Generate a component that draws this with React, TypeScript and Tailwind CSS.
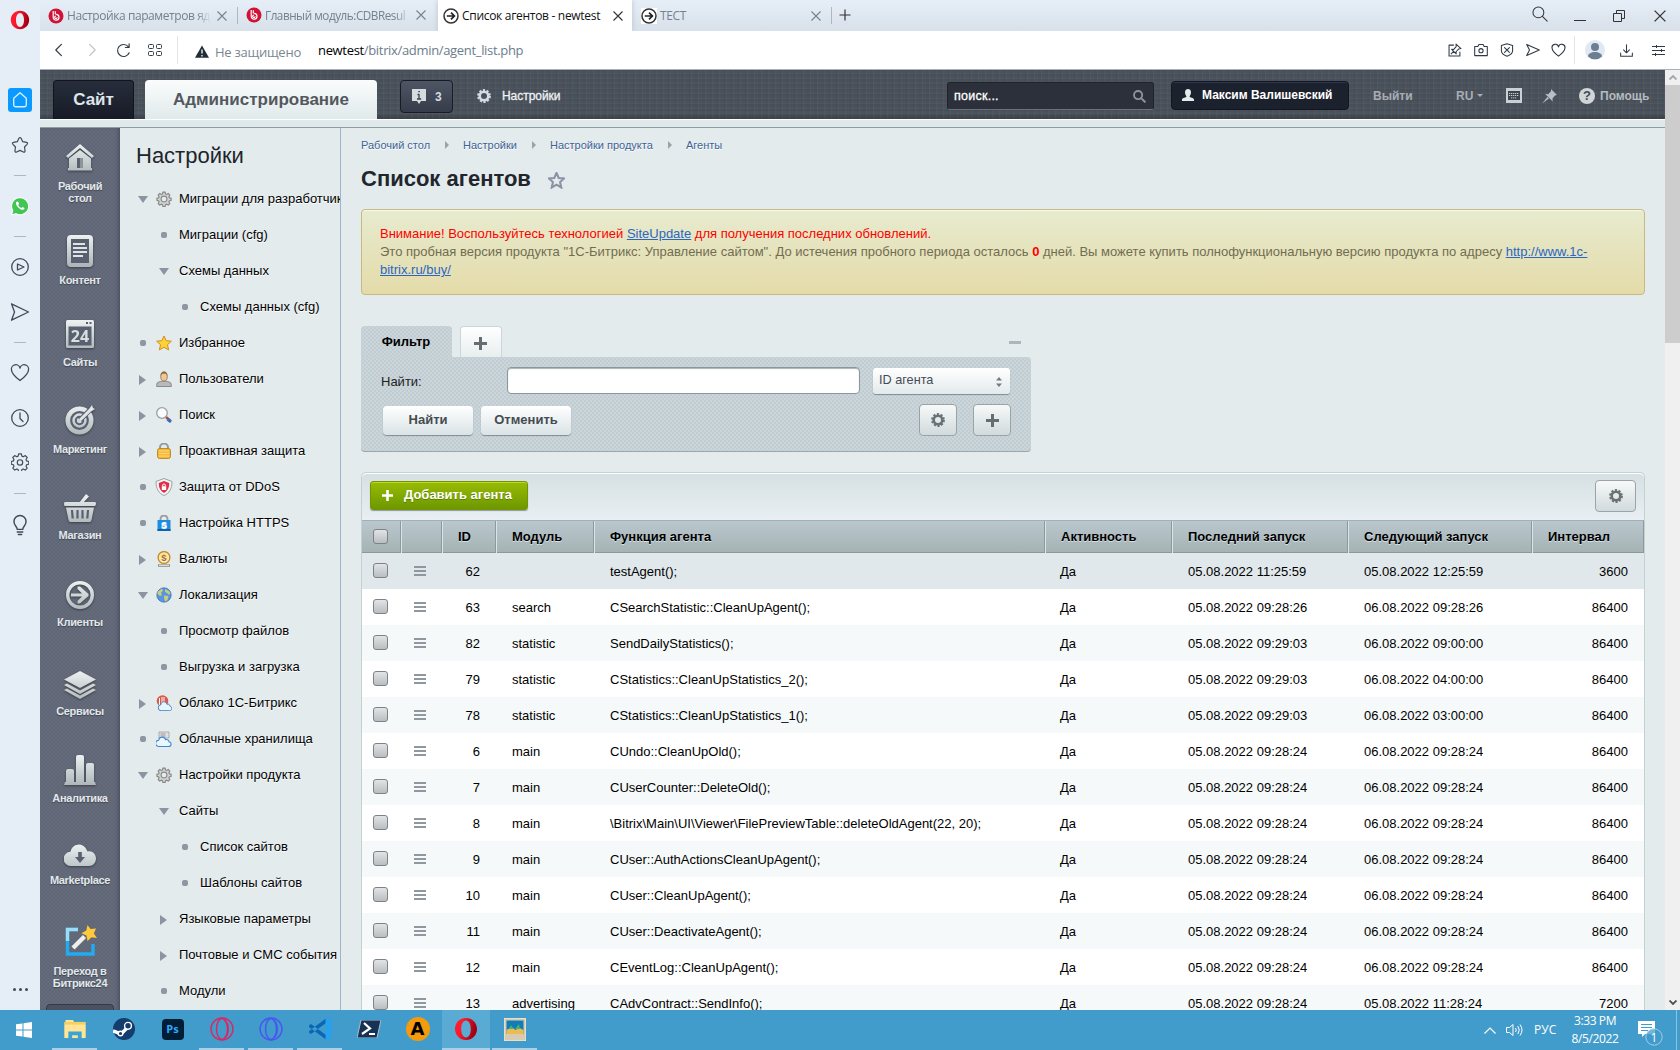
import React from "react";

type P = { className?: string };

/* ---------- browser side bar icons ---------- */

const OperaO = ({ className = "", a = "#ff1b2d", b = "#a70014" }: P & { a?: string; b?: string }) => (
  <svg viewBox="0 0 24 24" className={className}>
    <defs>
      <linearGradient id={"op" + a.slice(1)} x1="0" y1="0" x2="1" y2="0.3">
        <stop offset="0.35" stopColor={a} />
        <stop offset="1" stopColor={b} />
      </linearGradient>
    </defs>
    <path fillRule="evenodd" fill={`url(#op${a.slice(1)})`} d="M12 1C5.8 1 1 5.9 1 12s4.8 11 11 11 11-4.900 11-11S18.200 1 12 1Zm0 2.600c3 0 4.800 3.700 4.800 8.400s-1.800 8.400-4.800 8.400S7.200 16.700 7.200 12 9 3.600 12 3.600Z" />
  </svg>
);

const Line = ({ className = "", children, w = 1.3 }: P & { children: React.ReactNode; w?: number }) => (
  <svg viewBox="0 0 20 20" className={className} fill="none" stroke="currentColor" strokeWidth={w} strokeLinecap="round" strokeLinejoin="round">
    {children}
  </svg>
);

const roundStar = "M8.800 2.600Q10 .8 11.200 2.600L13 6.300 17.200 7Q19.300 7.500 17.800 9.200L15 12.200 15.600 16.300Q15.700 18.500 13.700 17.700L10 16 6.300 17.700Q4.300 18.500 4.400 16.300L5 12.200 2.200 9.200Q.7 7.500 2.800 7L7 6.300Z";
const sharpStar = "M10 1 12.600 7 19 7.600 14.200 11.800 15.600 18.200 10 14.800 4.400 18.200 5.800 11.800 1 7.600 7.400 7Z";
const heartPath = "M10 17.500C6 14.500 1.500 11 1.500 7A4.300 4.300 0 0 1 10 5.200 4.300 4.300 0 0 1 18.500 7C18.500 11 14 14.500 10 17.500Z";
const cogPath =
  "M8.500 1h3l.6 2.500 1.500.7 2.300-1.300 2.100 2.100-1.300 2.300.6 1.500 2.500.7v2.900l-2.500.7-.6 1.500 1.300 2.300-2.100 2.100-2.300-1.300-1.500.7-.6 2.400h-3l-.6-2.400-1.500-.7-2.300 1.300L2 16.900l1.300-2.300-.6-1.500-2.400-.7V9.500l2.400-.7.6-1.500L2 5l2.100-2.100 2.300 1.300 1.500-.7Z";

const SidebarRule = ({ className = "" }: P) => <div className={`h-px w-3 shrink-0 bg-[#a9b7c6] ${className}`} />;

function OperaSidebar() {
  return (
    <aside className="flex h-[1010px] w-10 shrink-0 flex-col items-center bg-[#e5edf6] text-[#3f4a59]">
      <OperaO className="mt-[10px] h-5 w-5 shrink-0" />
      <div className="mt-[58px] flex h-6 w-6 shrink-0 items-center justify-center rounded-[3px] bg-[#0a9aff] text-[#d9f0ff]">
        <Line className="h-[18px] w-[18px]" w={1.500}><path d="M3 8 10 2l7 6v7.500a2 2 0 0 1-2 2H5a2 2 0 0 1-2-2Z" /></Line>
      </div>
      <Line className="mt-[24px] mb-px h-[18px] w-[18px] shrink-0"><path d={roundStar} /></Line>
      <SidebarRule className="mt-5" />
      <svg viewBox="0 0 20 20" className="mt-5 h-5 w-5 shrink-0">
        <path d="M1.500 19 2.700 14.500A8.600 8.600 0 1 1 6 17.700Z" fill="#43c553" stroke="#f7fbf8" strokeWidth="1.200" />
        <path d="M7 5.500c-1.600.8-1.400 3.300 1.300 6s5.300 3 6.200 1.300l-.1-.9-2-1-1.200 1.100c-1.300-.5-2.400-1.700-3-2.900l.9-1.200-.9-2.200Z" fill="#fff" />
      </svg>
      <SidebarRule className="mt-5" />
      <Line className="mt-5 h-5 w-5 shrink-0"><circle cx="10" cy="10" r="8.300" /><path d="M7.500 7v6l6.500-3Z" /></Line>
      <Line className="mt-[25px] h-5 w-5 shrink-0"><path d="M1.500 1.800 18.500 10 1.500 18.200 4.500 10Z" /></Line>
      <SidebarRule className="mt-5" />
      <Line className="mt-5 h-5 w-5 shrink-0"><path d={heartPath} /></Line>
      <Line className="mt-[25px] h-5 w-5 shrink-0"><circle cx="10" cy="10" r="8.300" /><path d="M10 5v5.500l3 3" /></Line>
      <Line className="mt-[25px] h-[18px] w-[18px] shrink-0"><path d={cogPath} /><circle cx="10" cy="10.500" r="3" /></Line>
      <SidebarRule className="mt-[22px]" />
      <Line className="mt-5 h-[22px] w-[22px] shrink-0"><path d="M7.500 14C7.500 11.500 4.500 10.500 4.500 6.800a5.500 5.500 0 0 1 11 0c0 3.700-3 4.700-3 7.200ZM7.500 16.300h5M8.500 18.700h3" /></Line>
      <div className="mt-auto mb-[19px] flex shrink-0 gap-[3px]">
        <i className="h-[3px] w-[3px] rounded-full bg-[#3f4a59]" />
        <i className="h-[3px] w-[3px] rounded-full bg-[#3f4a59]" />
        <i className="h-[3px] w-[3px] rounded-full bg-[#3f4a59]" />
      </div>
    </aside>
  );
}

/* ---------- tab strip and address bar ---------- */

const BitrixDot = () => (
  <svg viewBox="0 0 16 16" className="h-4 w-4 shrink-0">
    <circle cx="8" cy="8" r="7.500" fill="#cf1235" />
    <path d="M5.200 3v6.300A2.900 2.900 0 1 0 8.100 6.400M7.300 3.300v3.300M8 8.100a1.200 1.200 0 1 0 1.100 1.200" stroke="#fff" strokeWidth="1.200" fill="none" />
  </svg>
);
const ArrowDot = () => (
  <svg viewBox="0 0 16 16" className="h-4 w-4 shrink-0 bg-white">
    <circle cx="8" cy="8" r="7" fill="#fff" stroke="#333" strokeWidth="1.500" />
    <path d="M3.800 8h7M8 4.600 11.400 8 8 11.400" stroke="#222" strokeWidth="1.700" fill="none" />
  </svg>
);
const Cross = ({ className = "h-[10px] w-[10px]" }: P) => (
  <svg viewBox="0 0 10 10" className={`shrink-0 ${className}`} stroke="currentColor" strokeWidth="1.100"><path d="m.5.5 9 9m0-9-9 9" /></svg>
);

function TabStrip() {
  return (
    <div className="flex h-[31px] items-center bg-gradient-to-b from-[#e6eef7] to-[#d8e0e9] font-['Open_Sans','Noto_Sans',sans-serif] text-[12px] tracking-[-0.36px] text-[#74828f]">
      <div className="flex w-[198px] items-center pl-2">
        <BitrixDot />
        <span className="ml-[3px] w-[144px] overflow-hidden tracking-[-0.42px] whitespace-nowrap [mask-image:linear-gradient(90deg,#000_90%,transparent)]">Настройка параметров яд</span>
        <Cross className="ml-[6px] h-[10px] w-[10px]" />
        <i className="ml-[10px] h-[17px] w-px bg-[#a9b9c9]" />
      </div>
      <div className="flex w-[200px] items-center pl-2">
        <BitrixDot />
        <span className="ml-[3px] w-[145px] overflow-hidden text-[11.700px] tracking-[-0.45px] whitespace-nowrap [mask-image:linear-gradient(90deg,#000_90%,transparent)]">Главный модуль:CDBResul</span>
        <Cross className="ml-[6px] h-[10px] w-[10px]" />
      </div>
      <div className="flex h-full w-[194px] items-center bg-white pl-[5px] text-[#111] shadow-[0_0_5px_#b9c4cf] [clip-path:inset(0_-5px_0_-5px)]">
        <ArrowDot />
        <span className="ml-[3px] w-[146px] tracking-[-0.3px] whitespace-nowrap">Список агентов - newtest</span>
        <Cross className="ml-[5px] h-[10px] w-[10px] text-[#333]" />
      </div>
      <div className="flex w-[200px] items-center pl-[9px]">
        <ArrowDot />
        <span className="ml-[3px] w-[142px]">ТЕСТ</span>
        <Cross className="ml-[9px] h-[10px] w-[10px]" />
        <i className="ml-[10px] h-[17px] w-px bg-[#a9b9c9]" />
      </div>
      <svg viewBox="0 0 12 12" className="mb-px ml-[7px] h-3 w-3 text-[#333]" stroke="currentColor" strokeWidth="1.200"><path d="M6 .5v11M.5 6h11" /></svg>
      <div className="ml-auto flex items-center text-[#333]">
        <Line className="mb-1 h-[16px] w-[16px]"><circle cx="8" cy="8" r="6.800" /><path d="m13 13 6 6" /></Line>
        <i className="mt-[10px] ml-[26px] h-px w-3 bg-[#333]" />
        <svg viewBox="0 0 12 12" className="mr-[29px] ml-[27px] h-3 w-3" fill="none" stroke="currentColor"><path d="M.5 3.500h8v8h-8ZM3.500 3V.5h8v8H9" /></svg>
        <Cross className="mr-[14px] h-3 w-3" />
      </div>
    </div>
  );
}

function AddressBar() {
  return (
    <div className="flex h-[39px] items-center border-b border-[#a5b1bc] bg-white font-['Open_Sans','Noto_Sans',sans-serif] text-[#333d48]">
      <Line className="ml-[11px] h-4 w-4" w={1.500}><path d="M13 3 6 10l7 7" /></Line>
      <Line className="ml-[17px] h-4 w-4 text-[#c1c5c9]" w={1.500}><path d="m7 3 7 7-7 7" /></Line>
      <Line className="ml-4 h-[15px] w-[15px]" w={1.600}><path d="M17.500 13A8 8 0 1 1 16.500 5.200M17.500 1v5h-5" /></Line>
      <svg viewBox="0 0 14 12" className="ml-[17px] h-3 w-[14px]" fill="none" stroke="currentColor"><rect x=".5" y=".5" width="5" height="4" rx="1" /><rect x="8.500" y=".5" width="5" height="4" rx="1" /><rect x=".5" y="7.500" width="5" height="4" rx="1" /><rect x="8.500" y="7.500" width="5" height="4" rx="1" /></svg>
      <i className="ml-[15px] h-7 w-px bg-[#e1e5e9]" />
      <svg viewBox="0 0 14 13" className="mt-[2px] ml-[17px] h-[13px] w-[14px]"><path d="M7 .5 14 12.800H0Z" fill="#222d38" /><path d="M7 4.500v4M7 10v1.500" stroke="#fff" strokeWidth="1.300" /></svg>
      <span className="mt-[5px] ml-[6px] w-[103px] text-[13px] tracking-[-0.25px] whitespace-nowrap text-[#7b868f]">Не защищено</span>
      <span className="mt-px text-[13px] tracking-[-0.33px] whitespace-nowrap text-[#6b7c8b]"><b className="font-normal text-black">newtest</b>/bitrix/admin/agent_list.php</span>
      <div className="ml-auto flex items-center text-[#2f3a46]">
        <Line className="mr-3 h-[14px] w-[14px]" w={1.500}><path d="M8 3H1.500v15.500H17V13M11.500 1.500l7 6.500-3 .5-4 4 .2 3-6.500-6.500 3 .2 3.500-4ZM8 12l-3.500 3.500" /></Line>
        <Line className="mr-3 h-[14px] w-[14px]" w={1.500}><path d="M1 5h4.500l1.500-3h6l1.500 3H19v13H1Z" /><circle cx="10" cy="11" r="3" /></Line>
        <Line className="mr-3 h-[14px] w-[14px]" w={1.500}><path d="M10 1 18 3.500V11c0 4.500-4 6.500-8 8-4-1.500-8-3.500-8-8V3.500ZM6.500 6.500l7 7m0-7-7 7" /></Line>
        <Line className="mr-[11px] h-[14px] w-[14px]" w={1.500}><path d="M1 2l18 8L1 18l4-8Z" /></Line>
        <Line className="mr-2 h-[15px] w-[15px]" w={1.500}><path d={heartPath} /></Line>
        <i className="mr-[10px] h-7 w-px bg-[#e1e5e9]" />
        <svg viewBox="0 0 20 20" className="mr-[15px] h-5 w-5"><circle cx="10" cy="10" r="10" fill="#e0e8f1" /><circle cx="10" cy="7" r="4" fill="#6b7e92" /><path d="M3 16.500c0-6 14-6 14 0A10 10 0 0 1 3 16.500Z" fill="#6b7e92" /></svg>
        <Line className="mr-[19px] h-[13px] w-[13px]" w={1.600}><path d="M10 1v12M5.500 9l4.500 4.500L14.500 9M1 14v5h18v-5" /></Line>
        <svg viewBox="0 0 13 11" className="mr-[15px] h-[11px] w-[13px]" stroke="currentColor"><path d="M0 1.500h13M0 5.500h13M0 9.500h13M4.500 0v3M9.500 4v3M3.500 8v3" /></svg>
      </div>
    </div>
  );
}

/* ---------- admin header ---------- */

const SmallCog = ({ className = "" }: P) => (
  <svg viewBox="0 0 14 14" className={className}>
    <circle cx="7" cy="7" r="4.300" fill="none" stroke="currentColor" strokeWidth="2.600" />
    <circle cx="7" cy="7" r="6" fill="none" stroke="currentColor" strokeWidth="1.800" strokeDasharray="2.200 1.570" />
  </svg>
);

function AdminHeader() {
  return (
    <header className="flex h-[49px] items-start bg-[#4a525c] bg-[repeating-linear-gradient(0deg,rgba(255,255,255,0.025)_0_1px,transparent_1px_3px,rgba(0,0,0,0.03)_3px_5px),repeating-linear-gradient(90deg,rgba(255,255,255,0.03)_0_1px,transparent_1px_4px,rgba(0,0,0,0.02)_4px_7px),linear-gradient(180deg,rgba(0,0,0,0)_90%,rgba(0,0,0,0.25)_100%)] text-[13px] font-bold text-[#d5dde2]">
      <div className="mt-[10px] ml-[13px] h-[39px] w-[81px] rounded-t-[4px] border border-b-0 border-[#11141c] bg-gradient-to-b from-[#272d3b] to-[#171b27] text-center text-[17px] leading-[37px] text-[#dfe5e9]">Сайт</div>
      <div className="mt-[10px] ml-[11px] h-[39px] w-[232px] rounded-t-[4px] bg-gradient-to-b from-[#fbfcfc] to-[#e0eaeb] text-center text-[17px] leading-[39px] text-[#53585e]">Администрирование</div>
      <div className="mt-[10px] ml-[23px] flex h-[33px] w-[53px] items-center rounded-[4px] border border-[#181b22] bg-gradient-to-b from-[#4e5665] to-[#363c49] pl-[11px] text-[12px]">
        <svg viewBox="0 0 14 15" className="h-[15px] w-[14px]"><path d="M0 0h14v12H9l-2 3-2-3H0Z" fill="#d5dddf" /><path d="M7 5v5M5.500 5.500H7M5 10h4.200M6.300 2.700h1.600" stroke="#3c4350" strokeWidth="1.300" /></svg>
        <span className="ml-[9px]">3</span>
      </div>
      <SmallCog className="mt-[19px] ml-[24px] h-[14px] w-[14px]" />
      <span className="mt-[17px] ml-[11px] w-[59px] text-[12px] leading-[18px] font-medium tracking-[-0.05px] text-[#eef2f4] [-webkit-text-stroke:0.3px_#eef2f4]">Настройки</span>
      <div className="mt-3 ml-auto flex h-[28px] w-[207px] items-center rounded-[3px] border border-[#20232a] border-b-[#6b707a] bg-[#2c303b] px-[6px] text-[12.500px] font-normal text-white">
        <span className="tracking-[0.25px] [-webkit-text-stroke:0.3px_#fff]">поиск...</span>
        <svg viewBox="0 0 14 14" className="mr-px ml-auto h-[13px] w-[13px]" fill="none" stroke="#8e949c"><circle cx="5.500" cy="5.500" r="4.400" strokeWidth="2" /><path d="m9 9 4.300 4.300" strokeWidth="2.200" /></svg>
      </div>
      <div className="mt-[11px] ml-[17px] flex h-[29px] w-[178px] items-center rounded-[4px] border border-[#12151d] bg-[#1c212e] pb-[2px] pl-[10px] text-[12px] whitespace-nowrap text-white shadow-[inset_0_1px_0_#2c3855]">
        <svg viewBox="0 0 12 12" className="mr-[8px] h-3 w-3 shrink-0"><path d="M6 0c2 0 3 1.400 3 3.300S8 7 7.500 7.400c0 1 4.500 1.200 4.500 3.100V12H0v-1.500c0-1.900 4.500-2.100 4.500-3.100C4 7 3 5.200 3 3.300S4 0 6 0Z" fill="#e5eaec" /></svg>
        Максим Валишевский
      </div>
      <span className="mt-[17px] ml-6 w-[83px] text-[12px] leading-[18px] text-[#a8adb4]">Выйти</span>
      <span className="mt-[17px] w-[50px] text-[12px] leading-[18px] text-[#a8adb4]">RU<i className="mb-[3px] ml-1 inline-block border-x-[3px] border-t-[3px] border-x-transparent border-t-[#a8adb4]" /></span>
      <svg viewBox="0 0 16 15" className="mt-[18px] h-[15px] w-4"><path d="M0 0h16v15H0Z" fill="#c9d1d5" /><path d="M2 3h12v9H2Z" fill="#3f454f" /><path d="M3 5.500h10M3 7.500h10M5 9.900h6" stroke="#c7ccd0" strokeDasharray="1.300 .7" /></svg>
      <svg viewBox="0 0 15 15" className="mt-[19px] ml-[20px] h-[15px] w-[15px]"><path d="m9 0 6 6-2 .5-2.500 3 .2 3-7.500-7.500 3 .2 2.800-3ZM5.500 8 0 14.500 7 9.500Z" fill="#b9bec3" /></svg>
      <div className="mt-[18px] ml-[22px] flex h-4 w-4 items-center justify-center rounded-full bg-[#d0d5d8] text-[13px] text-[#434955]">?</div>
      <span className="mt-[17px] mr-[15px] ml-[5px] w-[50px] text-[12px] leading-[18px] text-[#b5babf]">Помощь</span>
    </header>
  );
}

/* ---------- main icon menu ---------- */

const Metal = ({ className = "", box, children }: P & { box: string; children: React.ReactNode }) => (
  <svg viewBox={box} className={`shrink-0 drop-shadow-[0_1px_1px_rgba(0,0,0,0.4)] ${className}`}>
    <defs>
      <linearGradient id="metal" gradientUnits="userSpaceOnUse" x1="0" y1="0" x2="0" y2="30"><stop offset="0" stopColor="#edf1f1" /><stop offset="1" stopColor="#afb7ba" /></linearGradient>
    </defs>
    {children}
  </svg>
);
const m = "url(#metal)";
const dark = "#596070";

const menu: { label: string[]; gap: string; labelGap: string; icon: React.ReactNode }[] = [
  {
    label: ["Рабочий", "стол"], gap: "mt-4", labelGap: "mt-[9px]",
    icon: <Metal box="0 0 28 27" className="h-[27px] w-7"><path d="M14 0 28 12l-2 2L14 4 2 14l-2-2ZM3 14.500 14 6l11 8.500V24h1v2.500H2V24h1Z" fill={m} /><path d="M11 14h6v10h-6Z" fill={dark} /><path d="M14 14h3v10h-3Z" fill="#8c949c" /></Metal>,
  },
  {
    label: ["Контент"], gap: "mt-[31px]", labelGap: "mt-[7px]",
    icon: <Metal box="0 0 26 32" className="h-8 w-[26px]"><rect width="26" height="32" rx="4" fill={m} /><rect x="4" y="4" width="18" height="24" fill={dark} /><path d="M6 9h12M6 13h14M6 17h14M6 21h10" stroke="#dfe4e5" strokeWidth="1.800" /></Metal>,
  },
  {
    label: ["Сайты"], gap: "mt-[34px]", labelGap: "mt-2",
    icon: <Metal box="0 0 28 28" className="h-7 w-7"><rect width="28" height="28" rx="1.500" fill={m} /><rect x="2.500" y="6.500" width="23" height="19" fill={dark} /><path d="M20 3h2M23.500 3h2" stroke={dark} strokeWidth="2" /><text x="14" y="22" textAnchor="middle" fontSize="16" fontWeight="700" fontFamily="Open Sans" fill="#d9dede">24</text></Metal>,
  },
  {
    label: ["Маркетинг"], gap: "mt-[37px]", labelGap: "mt-2",
    icon: <Metal box="0 0 30 30" className="h-[30px] w-[30px]"><circle cx="14.500" cy="15.500" r="14" fill={m} /><circle cx="14.500" cy="15.500" r="8.300" fill="none" stroke={dark} strokeWidth="2.200" /><circle cx="14.500" cy="15.500" r="3.700" fill="none" stroke={dark} strokeWidth="2" /><path d="m15 15 13-13" stroke={dark} strokeWidth="5" /><path d="M14 14 24 4l3-4 1 3 2 1-4 2.500-10.500 10Z" fill="#e1e5e6" /></Metal>,
  },
  {
    label: ["Магазин"], gap: "mt-[39px]", labelGap: "mt-[7px]",
    icon: <Metal box="0 0 32 28" className="h-7 w-8"><path d="m22 0 3 2.500L19 9h-4ZM1 8h30q1 0 1 1.500T31 12H1q-1 0-1-2T1 8ZM2 13.500h28L27.500 26q-.5 2-2 2h-19q-1.500 0-2-2Z" fill={m} /><path d="m8 16 .7 8.500M13.500 16v8.500M18.500 16v8.500M24 16l-.7 8.500" stroke={dark} strokeWidth="2.200" /></Metal>,
  },
  {
    label: ["Клиенты"], gap: "mt-10", labelGap: "mt-[7px]",
    icon: <Metal box="0 0 28 28" className="h-7 w-7"><circle cx="14" cy="14" r="12.300" fill="none" stroke={m} strokeWidth="3.400" /><path d="M5 12.500h11l-4.500-4.500V5.500h2.500L22.500 13v2L14 22.500h-2.500V20l4.500-4.500H5Z" fill={m} /></Metal>,
  },
  {
    label: ["Сервисы"], gap: "mt-[43px]", labelGap: "mt-[6px]",
    icon: <Metal box="0 0 32 28" className="h-7 w-8"><path d="m16 0 16 8.500L16 17 0 8.500ZM0 14l3-1.500 13 7 13-7 3 1.500-16 9ZM0 19l3-1.500 13 7 13-7 3 1.500-16 9Z" fill={m} /></Metal>,
  },
  {
    label: ["Аналитика"], gap: "mt-[38px]", labelGap: "mt-[7px]",
    icon: <Metal box="0 0 32 30" className="h-[30px] w-8"><path d="M1 27h1V16q0-2 2-2h4q2 0 2 2v11h2V2q0-2 2-2h4q2 0 2 2v25h2V10q0-2 2-2h4q2 0 2 2v17h1l1 3H0Z" fill={m} /></Metal>,
  },
  {
    label: ["Marketplace"], gap: "mt-10", labelGap: "mt-2",
    icon: <Metal box="0 0 32 22" className="h-[22px] w-8"><path d="M7 22a7 7 0 0 1-.5-14.200C8-1 20-3 23.500 7.500 28 6 32 10 32 14.500c0 4-3 7.500-7 7.500Z" fill={m} /><path d="M14.200 8h3.600v5H21l-5 6-5-6h3.200Z" fill={dark} /></Metal>,
  },
  {
    label: ["Переход в", "Битрикс24"], gap: "mt-[39px]", labelGap: "mt-[9px]",
    icon: (
      <svg viewBox="0 0 32 31" className="ml-[2px] h-[31px] w-8 shrink-0">
        <path d="M13 4.500H2.500V29h25.500V19" fill="none" stroke="#22abf0" strokeWidth="3.400" />
        <path d="M13 4.500H2.500V16" fill="none" stroke="#9bdcf9" strokeWidth="3.400" />
        <path d="m8 23 11.500-11.500" stroke="#eceff0" strokeWidth="4.500" />
        <path d="m22.500 0 3 4 5.500-.5-2.200 5L32 13l-5.500-.8L22.500 16l-1-5.500-5-2.300 4.800-2.700Z" fill="#ffc93a" />
      </svg>
    ),
  },
];

function IconMenu() {
  return (
    <nav className="flex w-20 shrink-0 flex-col items-center overflow-hidden bg-[#666c7b] bg-[radial-gradient(#596070_0.5px,transparent_1px),radial-gradient(#596070_0.5px,transparent_1px)] bg-[length:4px_4px] bg-[position:0_0,2px_2px] text-[11px] leading-3 font-bold text-[#e3e8ea] shadow-[inset_-3px_0_4px_-2px_#444a58]">
      {menu.map((it) => (
        <div key={it.label[0]} className={`flex shrink-0 flex-col items-center ${it.gap}`}>
          {it.icon}
          <div className={`text-center tracking-[-0.32px] [text-shadow:0_1px_1px_#3f4553] ${it.labelGap}`}>
            {it.label.map((l) => <div key={l}>{l}</div>)}
          </div>
        </div>
      ))}
      <div className="mt-[15px] h-5 w-[68px] shrink-0 rounded-[4px] border border-[#343a47] bg-[#4b5161]" />
    </nav>
  );
}

/* ---------- settings tree ---------- */

const G = ({ children }: { children: React.ReactNode }) => <svg viewBox="0 0 16 16" className="h-4 w-4 shrink-0">{children}</svg>;
const gearIcon = <svg viewBox="-1 -.5 22 22" className="h-4 w-4 shrink-0"><path d={cogPath} fill="#d2d2d2" stroke="#858585" strokeWidth="1.500" /><circle cx="10" cy="10.600" r="4" fill="#e4ebec" stroke="#8b8b8b" strokeWidth="1.500" /></svg>;
const cloud = "M4 15.500a3 3 0 0 1-.3-6C4 6 9 5.500 10.200 9c2.500-.5 3.300 1 3.200 2 3.200.5 2.500 4.500-.4 4.500Z";
const icons: Record<string, React.ReactNode> = {
  gear: gearIcon,
  star: <G><path d="m8 1 2.200 4.700 5.100.5-3.800 3.500 1.100 5.200L8 12.300l-4.600 2.600 1.100-5.200L.7 6.200l5.100-.5Z" fill="#fcd337" stroke="#d28c1d" /></G>,
  user: <G><path d="M.7 15.500v-2C.7 10.500 5 10.800 6 10h4c1 .8 5.300.5 5.300 3.500v2Z" fill="#b9b9b9" stroke="#777" strokeWidth=".8" /><ellipse cx="8" cy="5.500" rx="3.300" ry="4.500" fill="#f0c698" stroke="#80603c" strokeWidth=".7" /><path d="M4.700 4.500C4.500-.8 11.500-.8 11.300 4.500L10 2.800H6.500Z" fill="#8b6a48" /></G>,
  search: <G><path d="m10 10 4.500 4" stroke="#b84a3a" strokeWidth="2.500" /><path d="m11.500 12 3.500 3" stroke="#4169b6" strokeWidth="3" /><circle cx="6" cy="6" r="5.300" fill="#f9fbfd" stroke="#9a9fa5" strokeWidth="1.300" /></G>,
  lock: <G><path d="M4 7V4.500a4 4 0 0 1 8 0V7" fill="none" stroke="#999" strokeWidth="2" /><rect x="1.500" y="5.500" width="13" height="10" rx="2" fill="#f6b733" stroke="#b87a17" strokeWidth=".8" /><path d="M3 8h10M3 10.500h10M3 13h10" stroke="#fadb83" strokeWidth="1" /></G>,
  ddos: <svg viewBox="0 0 18 18" className="-mr-px -ml-px h-[18px] w-[18px] shrink-0"><path d="m9 .5 8 3C17 11 14 15.500 9 17.500 4 15.500 1 11 1 3.500Z" fill="#f4f6f6" stroke="#999fa3" /><path d="m9 3 5.300 2C14.300 10 12.500 13 9 15 5.500 13 3.700 10 3.700 5Z" fill="#df3049" /><path d="M6.800 8.200h4.400v3.800H6.800Z" fill="#fff" /><path d="M7.700 8V6.700q1.300-1.700 2.600 0V8" fill="none" stroke="#fff" /></svg>,
  https: <G><path d="M4.500 6V4a3.500 3.500 0 0 1 7 0v2" fill="none" stroke="#9c9c9c" strokeWidth="1.900" /><path d="M1.500 5h13v11h-13Z" fill="#1c8de0" /><path d="M1.500 14h13v2h-13Z" fill="#0e63b0" /><text x="8" y="13" textAnchor="middle" fontSize="9" fontWeight="700" fontFamily="Liberation Sans" fill="#fff">S</text></G>,
  coin: <G><circle cx="8" cy="6.500" r="5.900" fill="#ffe6a4" stroke="#c58b2d" strokeWidth="1.300" /><path d="M2 14.500h12" stroke="#8e8e8e" strokeWidth="2.600" /><path d="M3 14.300h10" stroke="#eee" /><text x="8" y="10" textAnchor="middle" fontSize="9.500" fontWeight="700" fontFamily="Liberation Sans" fill="#a56b12">$</text></G>,
  globe: <G><circle cx="8" cy="8" r="7.200" fill="#5995df" stroke="#3b68a6" strokeWidth=".7" /><path d="M2 4.500 6 1.500l1 2L5 6l1 2-2 1-2.500-2ZM9 2l4 2 1.500 3-2 .5L11 6 9 5ZM8 8.500l4.500.5-1 4L9 14.500 8 11Z" fill="#c6cf80" /></G>,
  cloud1c: <G><circle cx="6.500" cy="6" r="5.800" fill="#d85a48" /><path d="M3.500 3v7M6 2v7M8 2v5" stroke="#fff" /><path d={cloud} transform="translate(1.500 .2) scale(.92 1)" fill="#e7f5fd" stroke="#3e83c8" /></G>,
  clouds: <G><path d="M3 1h10v6H3Z" fill="#e0e0e0" stroke="#939393" strokeWidth=".7" /><path d="M4.500 3h5M4.500 5h5" stroke="#999" /><path d={cloud} transform="translate(-1.200 -.8) scale(1.050)" fill="#eaf7ff" stroke="#3c88d4" /></G>,
};

type Mark = "d" | "r" | "b";
const tree: [number, Mark, string, string?][] = [
  [1, "d", "Миграции для разработчиков", "gear"],
  [2, "b", "Миграции (cfg)"],
  [2, "d", "Схемы данных"],
  [3, "b", "Схемы данных (cfg)"],
  [1, "b", "Избранное", "star"],
  [1, "r", "Пользователи", "user"],
  [1, "r", "Поиск", "search"],
  [1, "r", "Проактивная защита", "lock"],
  [1, "b", "Защита от DDoS", "ddos"],
  [1, "b", "Настройка HTTPS", "https"],
  [1, "r", "Валюты", "coin"],
  [1, "d", "Локализация", "globe"],
  [2, "b", "Просмотр файлов"],
  [2, "b", "Выгрузка и загрузка"],
  [1, "r", "Облако 1С-Битрикс", "cloud1c"],
  [1, "b", "Облачные хранилища", "clouds"],
  [1, "d", "Настройки продукта", "gear"],
  [2, "d", "Сайты"],
  [3, "b", "Список сайтов"],
  [3, "b", "Шаблоны сайтов"],
  [2, "r", "Языковые параметры"],
  [2, "r", "Почтовые и СМС события"],
  [2, "b", "Модули"],
];
const indent = ["", "pl-[17px]", "pl-[38px]", "pl-[59px]"];
const marks: Record<Mark, React.ReactNode> = {
  d: <i className="mt-px border-x-[5px] border-t-[7px] border-x-transparent border-t-[#8b95a2]" />,
  r: <i className="mt-px border-y-[5px] border-l-[7px] border-y-transparent border-l-[#8b95a2]" />,
  b: <i className="h-[6px] w-[6px] rounded-[2px] bg-[#8e98a3]" />,
};

function SettingsTree() {
  return (
    <div className="w-[221px] shrink-0 overflow-hidden border-r border-[#9fb4c9] text-black">
      <h2 className="h-[53px] pt-[15px] pl-4 text-[22px] leading-[26px] text-[#20242a]">Настройки</h2>
      {tree.map(([level, mark, label, icon], i) => (
        <div key={i} className={`flex h-9 items-center text-[13px] whitespace-nowrap [text-shadow:0_1px_0_#fff] ${indent[level]}`}>
          <span className="flex w-[11px] shrink-0 justify-center">{marks[mark]}</span>
          {icon ? <span className="mr-[7px] ml-[8px] flex">{icons[icon]}</span> : <span className="w-[10px] shrink-0" />}
          <span>{label}</span>
        </div>
      ))}
    </div>
  );
}

/* ---------- content ---------- */

const Sep = () => <i className="mx-[14.500px] inline-block border-y-[4px] border-l-[4px] border-y-transparent border-l-[#9aa3a8]" />;
const Plus = ({ className = "", c = "#666d70" }: P & { c?: string }) => <svg viewBox="0 0 13 13" className={className}><path d="M5 0h3v5h5v3H8v5H5V8H0V5h5Z" fill={c} /></svg>;
const dots = "bg-[#cbd6db] bg-[radial-gradient(#b9c5ca_0.5px,transparent_1px),radial-gradient(#b9c5ca_0.5px,transparent_1px)] bg-[length:4px_4px] bg-[position:0_0,2px_2px]";
const button = "flex items-center justify-center rounded-[4px] bg-gradient-to-b from-white to-[#dae3e6] pb-[2px] font-bold text-[#454c50] shadow-[0_1px_1px_#7f8b90]";
const square = "flex items-center justify-center rounded-[4px] border border-[#9aa4a8] bg-gradient-to-b from-[#f7f9f9] to-[#d1dadd] text-[#697175]";

function FilterPanel() {
  return (
    <section className="mt-[31px] w-[670px] text-[13px]">
      <div className="flex h-[31px]">
        <div className={`w-[91px] rounded-t-[4px] pr-px text-center text-[13px] leading-[32px] font-bold text-black ${dots}`}>Фильтр</div>
        <div className="ml-2 flex w-[42px] items-center justify-center rounded-t-[4px] border border-b-0 border-[#ccd6d9] bg-gradient-to-b from-white to-[#e8eeef] pt-[2px] pr-[2px]"><Plus className="h-[13px] w-[13px]" /></div>
        <i className="mt-[15px] mr-[10px] ml-auto h-[3px] w-3 bg-[#acb7bd]" />
      </div>
      <div className={`h-[95px] rounded-tr-[4px] rounded-b-[4px] border-b border-[#99a6aa] ${dots}`}>
        <div className="flex pt-[10px]">
          <span className="w-[146px] pl-5 leading-[29px] text-[#222]">Найти:</span>
          <div className="h-[27px] w-[353px] rounded-[4px] border border-[#8b979d] bg-white shadow-[inset_0_1px_1px_#a9b3b7]" />
          <div className="mt-px ml-[13px] flex h-[26px] w-[137px] items-center rounded-[3px] bg-gradient-to-b from-white to-[#e3eaec] pr-2 pl-[6px] text-[12.700px] text-[#454c55] shadow-[0_1px_1px_#7f8b90]">
            ID агента
            <svg viewBox="0 0 6 10" className="mt-[2px] ml-auto h-[10px] w-[6px]"><path d="m3 0 3 3.500H0ZM3 10 0 6.500h6Z" fill="#727b80" /></svg>
          </div>
        </div>
        <div className="mt-[8px] flex items-start">
          <div className={`mt-[2px] ml-[22px] h-[29px] w-[90px] ${button}`}>Найти</div>
          <div className={`mt-[2px] ml-2 h-[29px] w-[90px] ${button}`}>Отменить</div>
          <div className={`ml-auto h-8 w-[38px] ${square}`}><SmallCog className="h-[14px] w-[14px]" /></div>
          <div className={`mr-5 ml-4 h-8 w-[38px] ${square}`}><Plus className="h-[13px] w-[13px]" /></div>
        </div>
      </div>
    </section>
  );
}

const D = "05.08.2022 09:28:24";
const N = "06.08.2022 09:28:24";
const rows: string[][] = [
  ["62", "", "testAgent();", "05.08.2022 11:25:59", "05.08.2022 12:25:59", "3600"],
  ["63", "search", "CSearchStatistic::CleanUpAgent();", "05.08.2022 09:28:26", "06.08.2022 09:28:26", "86400"],
  ["82", "statistic", "SendDailyStatistics();", "05.08.2022 09:29:03", "06.08.2022 09:00:00", "86400"],
  ["79", "statistic", "CStatistics::CleanUpStatistics_2();", "05.08.2022 09:29:03", "06.08.2022 04:00:00", "86400"],
  ["78", "statistic", "CStatistics::CleanUpStatistics_1();", "05.08.2022 09:29:03", "06.08.2022 03:00:00", "86400"],
  ["6", "main", "CUndo::CleanUpOld();", D, N, "86400"],
  ["7", "main", "CUserCounter::DeleteOld();", D, N, "86400"],
  ["8", "main", "\\Bitrix\\Main\\UI\\Viewer\\FilePreviewTable::deleteOldAgent(22, 20);", D, N, "86400"],
  ["9", "main", "CUser::AuthActionsCleanUpAgent();", D, N, "86400"],
  ["10", "main", "CUser::CleanUpAgent();", D, N, "86400"],
  ["11", "main", "CUser::DeactivateAgent();", D, N, "86400"],
  ["12", "main", "CEventLog::CleanUpAgent();", D, N, "86400"],
  ["13", "advertising", "CAdvContract::SendInfo();", D, "05.08.2022 11:28:24", "7200"],
];
const cols = "grid grid-cols-[39px_41px_54px_98px_451px_127px_176px_184px_112px]";
const Check = () => <i className="block h-[15px] w-[15px] rounded-[3px] border border-[#7c8286] bg-gradient-to-b from-[#e2e4e6] to-[#b9bec1]" />;

function AgentTable() {
  return (
    <section className="mt-[20px] w-[1284px] rounded-t-[5px] border border-b-0 border-[#c5d0d3] text-[13px] text-black">
      <div className="flex h-[47px] items-start rounded-t-[5px] border-t border-white bg-gradient-to-b from-[#d6e0e2] to-[#e9eff2]">
        <div className="mt-[7px] ml-2 flex h-[29px] w-[158px] items-center rounded-[3px] border border-[#749400] bg-gradient-to-b from-[#98bb04] to-[#6d9800] pl-[11px] font-bold whitespace-nowrap text-white shadow-[0_1px_1px_#8e9a9d,inset_0_1px_0_#b9da20]">
          <Plus className="mr-[11px] h-[11px] w-[11px] shrink-0" c="#fff" />
          <span className="-mt-px text-[13px] [text-shadow:0_1px_0_#5b7d00]">Добавить агента</span>
        </div>
        <div className={`mt-[6px] mr-2 ml-auto h-8 w-[41px] ${square}`}><SmallCog className="h-[14px] w-[14px]" /></div>
      </div>
      <div className={`h-[33px] border-t border-b border-t-[#a1b0b8] border-b-[#8a979b] bg-gradient-to-b from-[#b9c7ce] to-[#a6b3b4] text-[13px] leading-[32px] font-bold whitespace-nowrap [text-shadow:0_1px_0_#d8e2e6] ${cols}`}>
        <div className="flex items-center border-r border-[#8c999f] pb-px pl-[11px]"><Check /></div>
        {["", "ID", "Модуль", "Функция агента", "Активность", "Последний запуск", "Следующий запуск", "Интервал"].map((h, i) => (
          <div key={i} className="border-r border-l border-r-[#8c999f] border-l-[#dbe4e8] pl-[15px]">{h}</div>
        ))}
      </div>
      {rows.map((r, i) => (
        <div key={r[0]} className={`h-9 items-center whitespace-nowrap ${cols} ${i === 0 ? "bg-[#e0e8eb]" : i % 2 ? "bg-white" : "bg-[#f5f9f9]"}`}>
          <div className="pb-px pl-[11px]"><Check /></div>
          <div className="flex flex-col gap-[2px] pl-[13px]"><i className="h-[2px] w-3 bg-[#8f989f]" /><i className="h-[2px] w-3 bg-[#8f989f]" /><i className="h-[2px] w-3 bg-[#8f989f]" /></div>
          <div className="pt-px pr-[16px] text-right">{r[0]}</div>
          <div className="pt-px pl-[16px]">{r[1]}</div>
          <div className="pt-px pl-[16px]">{r[2]}</div>
          <div className="pt-px pl-[15px]">Да</div>
          <div className="pt-px pl-[16px]">{r[3]}</div>
          <div className="pt-px pl-[16px]">{r[4]}</div>
          <div className="pt-px pr-[16px] text-right">{r[5]}</div>
        </div>
      ))}
    </section>
  );
}

function Content() {
  return (
    <main className="min-w-0 flex-1 overflow-hidden pl-5">
      <div className="flex items-center pt-[10px] text-[11px] leading-[14px] text-[#3d6396] [text-shadow:0_1px_0_#fff]">
        <span className="w-[69px] whitespace-nowrap">Рабочий стол</span><Sep /><span className="w-[54px]">Настройки</span><Sep /><span className="w-[103px] whitespace-nowrap">Настройки продукта</span><Sep /><span>Агенты</span>
      </div>
      <div className="mt-[13px] flex h-[28px] items-center">
        <h1 className="w-[187px] text-[22px] leading-7 font-bold whitespace-nowrap text-[#22262c]">Список агентов</h1>
        <svg viewBox="0 0 20 20" className="mt-[3px] h-[17px] w-[17px]"><path d={sharpStar} fill="#e3ebed" stroke="#8993a3" strokeWidth="2.400" /></svg>
      </div>
      <div className="mt-[16px] h-[86px] w-[1284px] rounded-[4px] border border-[#c9b97f] bg-gradient-to-b from-[#e7ebcf] to-[#e4dba9] pt-[15px] pr-10 pl-[18px] text-[13px] leading-[18px] text-[#716d51] shadow-[inset_0_1px_0_#f8f9e9]">
        <p className="text-[#f00]">Внимание! Воспользуйтесь технологией <span className="text-[#2a67c4] underline">SiteUpdate</span> для получения последних обновлений.</p>
        <p className="whitespace-nowrap">Это пробная версия продукта "1С-Битрикс: Управление сайтом". До истечения пробного периода осталось <b className="text-[#f00]">0</b> дней. Вы можете купить полнофункциональную версию продукта по адресу <span className="text-[#2a67c4] underline">http://www.1c-<br />bitrix.ru/buy/</span></p>
      </div>
      <FilterPanel />
      <AgentTable />
    </main>
  );
}

/* ---------- taskbar ---------- */

const Slot = ({ className = "w-[49px]", open, children }: P & { open?: boolean; children: React.ReactNode }) => (
  <div className={`flex h-10 shrink-0 items-center justify-center border-b-2 ${open ? "[border-image:linear-gradient(90deg,transparent_4px,#a9d0e6_4px,#a9d0e6_45px,transparent_45px)_2]" : "border-transparent"} ${className}`}>{children}</div>
);
const Rings = ({ c }: { c: string }) => <svg viewBox="0 0 24 24" className="h-6 w-6" fill="none" stroke={c} strokeWidth="1.400"><circle cx="12" cy="12" r="11" /><ellipse cx="12" cy="12" rx="5.500" ry="10.500" /><path d="M14.500 3.500c5 2 5 15 0 17" /></svg>;

function Taskbar() {
  return (
    <footer className="flex h-10 items-center bg-[#429ccb] font-['Open_Sans','Noto_Sans',sans-serif] text-[12px] text-white">
      <svg viewBox="0 0 16 16" className="mr-[18px] ml-4 h-4 w-4 shrink-0" fill="#fff"><path d="M0 2.300 6.500 1.400v6.100H0ZM7.500 1.200 16 0v7.500H7.500ZM0 8.500h6.500v6.100L0 13.700ZM7.500 8.500H16V16l-8.500-1.200Z" /></svg>
      <Slot open><svg viewBox="0 0 22 20" className="h-[19px] w-[22px]"><path d="M0 2h1V0h8l1 2h12v17H0Z" fill="#ffe595" /><path d="M0 2h22v3H0Z" fill="#f5cf62" /><path d="M0 5h22v14H0Z" fill="#ffe595" /><path d="M4 12h14v7h-4v-3H8v3H4Z" fill="#38a5d6" /></svg></Slot>
      <Slot><svg viewBox="0 0 22 22" className="h-[22px] w-[22px]"><circle cx="11" cy="11" r="11" fill="#143c6c" /><path d="m0 13 8 3 7-7" stroke="#fff" strokeWidth="3.500" fill="none" /><circle cx="7.500" cy="15.500" r="2.300" fill="#143c6c" stroke="#fff" strokeWidth="1.400" /><circle cx="15" cy="7.800" r="3.400" fill="#143c6c" stroke="#fff" strokeWidth="1.400" /></svg></Slot>
      <Slot><div className="h-[21px] w-[22px] rounded-[4px] bg-[#001e36] text-center text-[11px] leading-5 font-bold text-[#31a8ff]">Ps</div></Slot>
      <Slot open><Rings c="#d62a62" /></Slot>
      <Slot open><Rings c="#4a55f0" /></Slot>
      <Slot open><svg viewBox="0 0 24 24" className="h-6 w-6"><path d="M1 8.500 3 7l15 11v4.500L1 10ZM1 15.500 3 17l15-11V1.500L1 14Z" fill="#0b66b4" /><path d="M17.500.5 23.500 3v18l-6 2.500Z" fill="#27a0ee" /></svg></Slot>
      <Slot><svg viewBox="0 0 24 18" className="h-[18px] w-6"><path d="M4 0h20l-4 18H0Z" fill="#173354" stroke="#aebdcd" /><path d="m7 3 6 5.500L5 14M12 14h6" stroke="#fff" strokeWidth="2.200" fill="none" /></svg></Slot>
      <Slot><div className="h-6 w-6 rounded-full bg-[#f39a0d] text-center font-['DejaVu_Sans',sans-serif] text-[18px] leading-[24px] font-bold text-black">A</div></Slot>
      <Slot className="w-[48px] border-b-[#a9d0e6]! bg-[#5aabd4]"><OperaO className="h-[24px] w-[24px]" a="#ff1b2c" b="#a00010" /></Slot>
      <Slot open><svg viewBox="0 0 22 23" className="h-[23px] w-[22px]"><path d="M0 0h22v23H0Z" fill="#d9cbb0" stroke="#f7efdf" /><path d="M2.500 2.500h17V16h-17Z" fill="#117db8" /><path d="m2.500 12 5-3 4 3 4-2 4 2v4h-17Z" fill="#e9bc56" /><path d="M5 11l2-4 2 4ZM11 11l4-5 1 5Z" fill="#45b46c" /></svg></Slot>
      <div className="ml-auto flex items-center">
        <svg viewBox="0 0 12 7" className="mr-[10px] h-[7px] w-3" fill="none" stroke="#fff" strokeWidth="1.200"><path d="M.5 6.500 6 1l5.500 5.500" /></svg>
        <svg viewBox="0 0 17 14" className="mr-[11px] h-[14px] w-[17px]" fill="none" stroke="#fff"><path d="M.5 4.500h3L7 1.500v11L3.500 9.500h-3ZM9.500 5q1.500 2 0 4M11.800 3q3 4 0 8M14 1.500q4 5.500 0 11" /></svg>
        <span className="w-[34px] text-[12px]">РУС</span>
        <div className="w-[54px] text-center leading-[18px] tracking-[-0.400px] whitespace-nowrap"><div>3:33 PM</div><div>8/5/2022</div></div>
        <svg viewBox="0 0 25 25" className="mt-[6px] mr-[13px] ml-[16px] h-[25px] w-[25px]"><path d="M0 0h17v13H7l-3 3v-3H0Z" fill="#fff" /><path d="M3 3.500h11M3 6.500h11M3 9.500h7" stroke="#429ccb" /><circle cx="16" cy="16" r="8.200" fill="#429ccb" fillOpacity=".75" stroke="#b7d8ea" strokeWidth=".8" /><text x="16" y="20.500" textAnchor="middle" fontSize="12" fontFamily="Open Sans" fill="#fff">1</text></svg>
        <i className="mr-[3px] h-10 w-px bg-[#8cc3df]" />
      </div>
    </footer>
  );
}

function Scrollbar() {
  return (
    <div className="flex w-[15px] shrink-0 flex-col items-center bg-[#f0f0f0]">
      <svg viewBox="0 0 8 5" className="mt-[5px] h-[5px] w-2 shrink-0" fill="none" stroke="#a5a5a5" strokeWidth="1.800"><path d="m.5 4.500 3.500-3.500 3.500 3.500" /></svg>
      <i className="mt-[5px] h-[258px] w-full shrink-0 bg-[#cdcdcd]" />
      <svg viewBox="0 0 8 5" className="mt-auto mb-[5px] h-[5px] w-2 shrink-0" fill="none" stroke="#505050" strokeWidth="1.800"><path d="m.5.5 3.500 3.500L7.500.5" /></svg>
    </div>
  );
}

export default function App() {
  return (
    <div className="h-[1050px] w-[1680px] overflow-hidden font-['Liberation_Sans',Arial,sans-serif]">
      <div className="flex h-[1010px]">
        <OperaSidebar />
        <div className="flex w-[1640px] flex-col">
          <TabStrip />
          <AddressBar />
          <div className="flex h-[940px] overflow-hidden">
            <div className="flex w-[1625px] flex-col bg-[#e3ebed]">
              <AdminHeader />
              <div className="h-[9px] shrink-0 border-t border-b border-t-white border-b-[#8f9da0] bg-[#dfe9eb]" />
              <div className="flex min-h-0 flex-1">
                <IconMenu />
                <SettingsTree />
                <Content />
              </div>
            </div>
            <Scrollbar />
          </div>
        </div>
      </div>
      <Taskbar />
    </div>
  );
}
